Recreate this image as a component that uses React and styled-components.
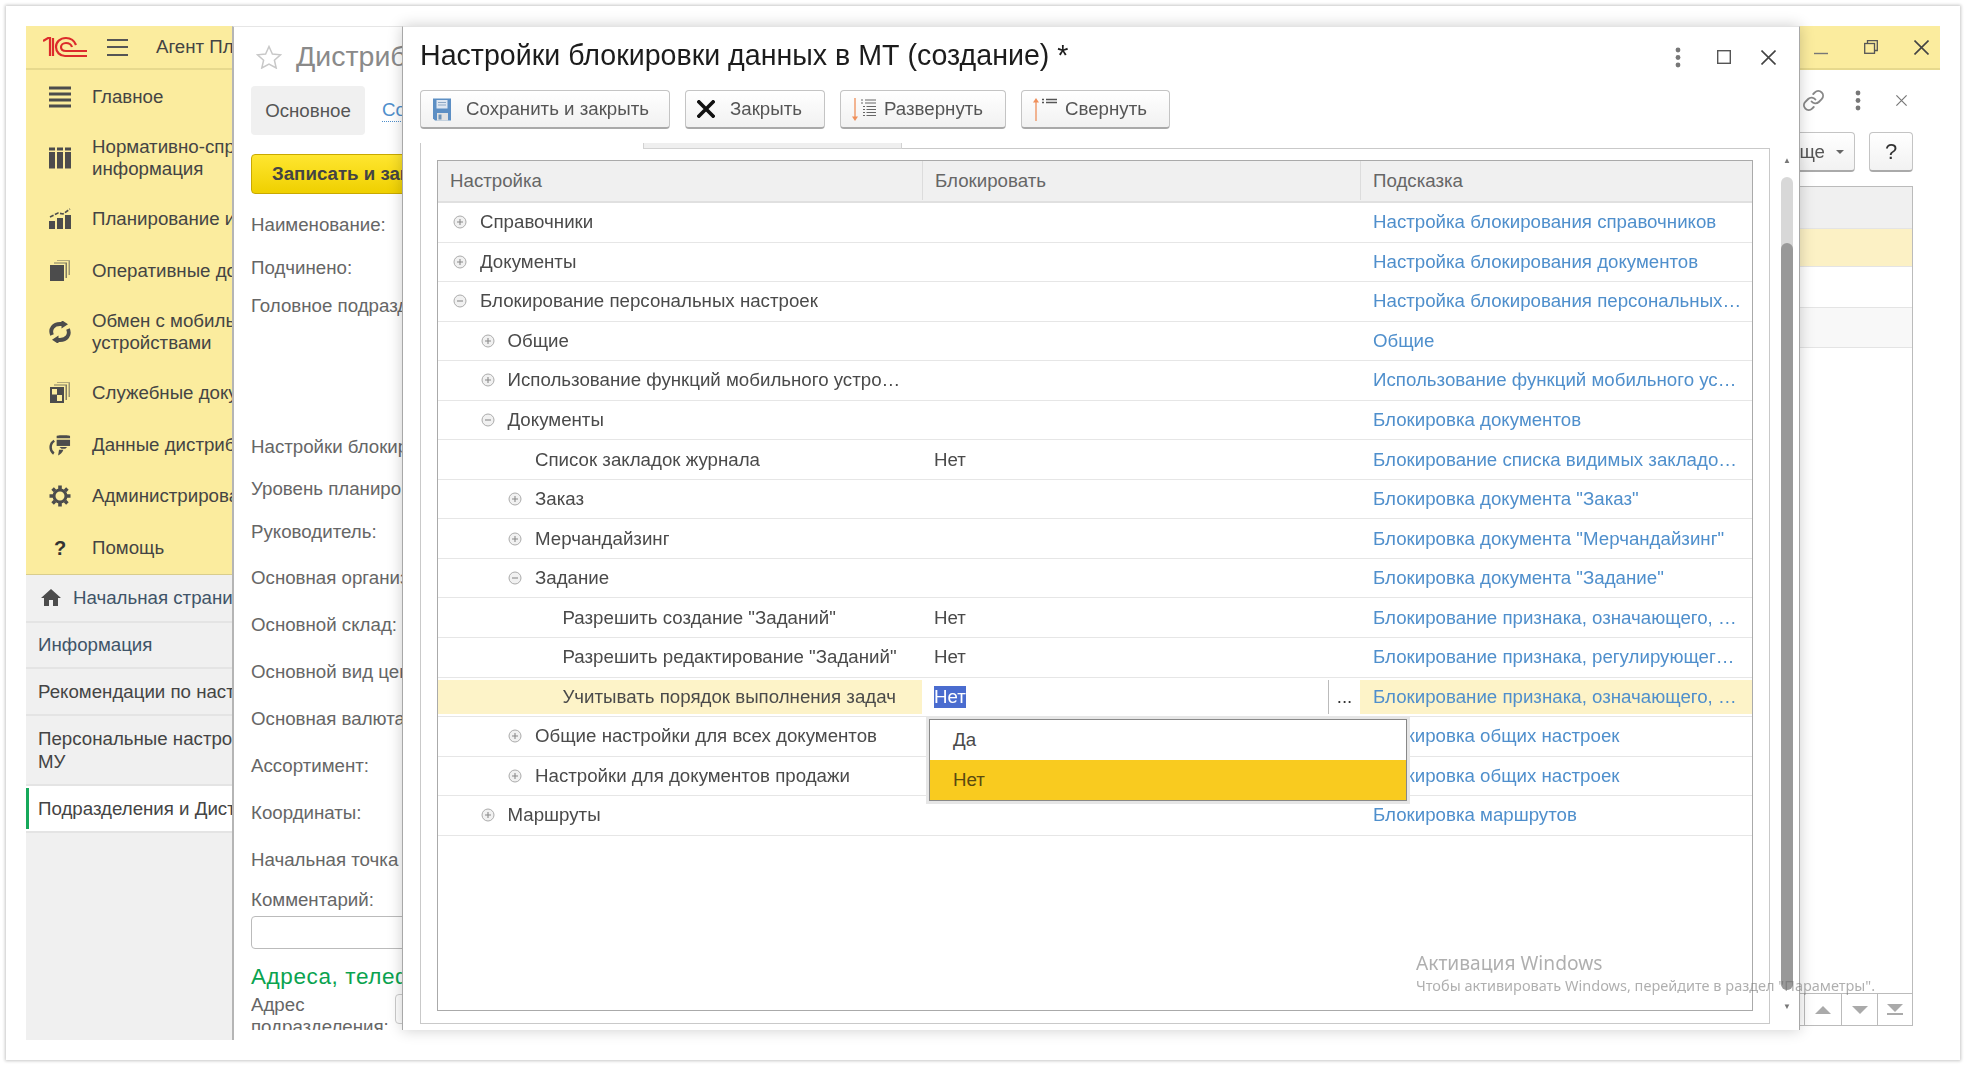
import React from "react";
import styled, { createGlobalStyle } from "styled-components";
import { Link as LinkIcon } from "lucide-react";
import { MdHome } from "react-icons/md";

const GlobalStyle = createGlobalStyle`
  html, body {
    margin: 0;
    background: #fff;
    font-family: "Liberation Sans", Arial, sans-serif;
  }
`;

const Frame = styled.div`
  position: relative;
  box-sizing: border-box;
  width: 1954px;
  height: 1054px;
  margin: 6px;
  padding: 20px;
  background: #fff;
  box-shadow: 0 0 3px 1px rgba(0, 0, 0, 0.22);
  filter: blur(0.45px);
  overflow: hidden;
`;

const Shell = styled.div`
  display: grid;
  grid-template-columns: 206px 170px 1398px 140px;
  grid-template-rows: 44px 970px;
  height: 1014px;
`;

const TopBar = styled.div`
  grid-column: 1 / 5;
  grid-row: 1;
  display: flex;
  align-items: center;
  box-sizing: border-box;
  padding: 0 11px 0 17px;
  background: #fbec9e;
  border-bottom: 2px solid #e7d98d;
  color: #444;
  font-size: 18.7px;
`;

const Hamburger = styled.div`
  width: 21px;
  height: 17px;
  margin-left: 20px;
  margin-right: 28px;
  border-top: 2px solid #555;
  border-bottom: 2px solid #555;
  position: relative;
  box-sizing: border-box;
  &::after {
    content: "";
    position: absolute;
    left: 0;
    right: 0;
    top: 5.5px;
    height: 2px;
    background: #555;
  }
`;

const AppTitle = styled.span`
  white-space: nowrap;
`;

const WindowButtons = styled.div`
  margin-left: auto;
  display: flex;
  align-items: center;
  gap: 36px;
  color: #555;
`;

const Sidebar = styled.aside`
  grid-column: 1;
  grid-row: 2;
  background: #f0f0f0;
  overflow: hidden;
  color: #444;
  font-size: 18.7px;
`;

const SectionList = styled.div`
  padding-top: 1px;
  background: #fbec9e;
  border-bottom: 1px solid #d9cd8c;
`;

const SectionItem = styled.div`
  display: flex;
  align-items: center;
  height: ${(p) => (p.$tall ? "71px" : "51.5px")};
  padding-left: 23px;
  gap: 21px;
  line-height: 22px;
  white-space: nowrap;
`;

const SectionIcon = styled.div`
  width: 22px;
  height: 24px;
  flex: none;
  display: flex;
  align-items: center;
  justify-content: center;
  color: #4c4c4c;
`;

const HelpMark = styled.span`
  font-size: 20px;
  font-weight: 700;
  color: #333;
`;

const OpenItem = styled.div`
  position: relative;
  display: flex;
  align-items: center;
  gap: 10px;
  box-sizing: border-box;
  padding: 0 0 0 12px;
  min-height: ${(p) => p.$height || 46.7}px;
  line-height: 23px;
  white-space: nowrap;
  border-bottom: 2px solid #e4e4e4;
  background: ${(p) => (p.$active ? "#fff" : "transparent")};
  color: ${(p) => (p.$blue ? "#3f5468" : "#444")};
  ${(p) =>
    p.$active &&
    `&::before {
      content: "";
      position: absolute;
      left: 0;
      top: 2px;
      bottom: 2px;
      width: 3px;
      background: #16a85a;
    }`}
`;

const HomeIconBox = styled.span`
  display: flex;
  color: #4c4c4c;
  margin-left: 1px;
`;

const FormColumn = styled.section`
  grid-column: 2;
  grid-row: 1 / 3;
  z-index: 1;
  box-sizing: border-box;
  padding-left: 17px;
  background: #fff;
  border-left: 2px solid #b5b5b5;
  border-top: 1px solid #e6e6e6;
  overflow: hidden;
  color: #666;
  font-size: 18.7px;
  white-space: nowrap;
`;

const FormHead = styled.div`
  display: flex;
  align-items: center;
  gap: 14px;
  height: 59px;
  padding-left: 5px;
  color: #8a8a8a;
  font-size: 28.5px;
`;

const Tabs = styled.div`
  display: flex;
  align-items: center;
  gap: 17px;
`;

const ActiveTab = styled.div`
  flex: none;
  width: 114px;
  height: 49px;
  display: flex;
  align-items: center;
  justify-content: center;
  border-radius: 4px;
  background: #f0f0f0;
  color: #555;
`;

const TabLink = styled.span`
  color: #4f8fcc;
  border-bottom: 1px dotted #4f8fcc;
`;

const PrimaryButton = styled.div`
  box-sizing: border-box;
  height: 40px;
  width: 200px;
  margin-top: 19px;
  padding-left: 20px;
  display: flex;
  align-items: center;
  border: 1px solid #c9a900;
  border-radius: 4px;
  background: linear-gradient(#ffe630, #efd000);
  color: #444;
  font-weight: 700;
`;

const FieldLabel = styled.div`
  height: ${(p) => p.$height}px;
  line-height: 22px;
  display: flex;
  align-items: flex-end;
  color: #666;
`;

const CommentInput = styled.div`
  box-sizing: border-box;
  height: 33px;
  width: 200px;
  margin-top: 5px;
  border: 1px solid #bbb;
  border-radius: 4px;
`;

const GroupTitle = styled.div`
  margin-top: 15px;
  line-height: 26px;
  color: #0aa34f;
  font-size: 22.5px;
  letter-spacing: 0.6px;
`;

const AddressRow = styled.div`
  display: flex;
  margin-top: 4px;
`;

const AddressLabel = styled.div`
  width: 144px;
  line-height: 22px;
  white-space: normal;
`;

const AddressInput = styled.div`
  flex: none;
  box-sizing: border-box;
  width: 60px;
  height: 30px;
  border: 1px solid #ccc;
  border-radius: 4px;
`;

const AddressClip = styled.div`
  flex: none;
  height: 36px;
  overflow: hidden;
`;

const Modal = styled.section`
  grid-column: 3;
  grid-row: 1 / 3;
  z-index: 3;
  display: flex;
  flex-direction: column;
  box-sizing: border-box;
  height: 1004px;
  padding-left: 17px;
  background: #fff;
  border-top: 1px solid #e4e4e4;
  border-left: 1px solid #a8a8a8;
  border-right: 1px solid #a8a8a8;
  box-shadow: 0 0 14px rgba(0, 0, 0, 0.2);
`;

const ModalHead = styled.div`
  display: flex;
  align-items: center;
  flex: none;
  box-sizing: border-box;
  height: 63px;
  padding: 0 23px 6px 0;
  color: #1c1c1c;
  font-size: 28.6px;
`;

const ModalTitle = styled.div`
  flex: 1;
  white-space: nowrap;
`;

const ModalActions = styled.div`
  display: flex;
  align-items: center;
  gap: 30px;
  margin-top: 3px;
  & > svg:first-child {
    margin-right: 6px;
  }
`;

const Toolbar = styled.div`
  flex: none;
  display: flex;
  gap: 15px;
`;

const ToolButton = styled.div`
  box-sizing: border-box;
  height: 39px;
  width: ${(p) => p.$width}px;
  display: flex;
  align-items: center;
  gap: ${(p) => p.$gap || 13}px;
  padding-left: ${(p) => p.$pad || 11}px;
  border: 1px solid #c4c4c4;
  border-bottom: 2px solid #a9a9a9;
  border-radius: 4px;
  background: linear-gradient(#fff, #f1f1f1);
  color: #555;
  font-size: 18.7px;
  white-space: nowrap;
`;

const ModalBody = styled.div`
  flex: 1;
  display: flex;
  margin-top: 14px;
  margin-bottom: 6px;
  min-height: 0;
`;

const TabPanel = styled.div`
  width: 1350px;
  display: flex;
  flex-direction: column;
`;

const TabStrip = styled.div`
  flex: none;
  display: flex;
  height: 6px;
  border-left: 1px solid #c9c9c9;
`;

const StripBlank = styled.div`
  width: 222px;
`;

const StripTail = styled.div`
  box-sizing: border-box;
  width: 259px;
  background: #efefef;
  border: 1px solid #d2d2d2;
  border-top: 0;
`;

const StripRest = styled.div`
  flex: 1;
  border-bottom: 1px solid #c9c9c9;
`;

const PanelBody = styled.div`
  flex: 1;
  min-height: 0;
  display: flex;
  box-sizing: border-box;
  padding: 11px 16px 12px;
  border: 1px solid #c9c9c9;
  border-top: 0;
`;

const Table = styled.div`
  position: relative;
  flex: 1;
  border: 1px solid #aaa;
  color: #4a4a4a;
  font-size: 18.7px;
  white-space: nowrap;
`;

const HeadRow = styled.div`
  display: grid;
  grid-template-columns: 484px 438px 1fr;
  box-sizing: border-box;
  height: 42px;
  padding-bottom: 1px;
  background: #f0f0f0;
  border-bottom: 2px solid #e0e0e0;
  color: #666;
`;

const HeadCell = styled.div`
  display: flex;
  align-items: center;
  padding-left: 12px;
  & + & {
    border-left: 1px solid #dcdcdc;
  }
`;

const Row = styled.div`
  display: grid;
  grid-template-columns: 484px 438px 1fr;
  box-sizing: border-box;
  height: 39.55px;
  border-bottom: 1px solid #e6e6e6;
`;

const NameCell = styled.div`
  display: flex;
  align-items: center;
  gap: 13px;
  margin: ${(p) => (p.$selected ? "2px 0" : "0")};
  padding-left: ${(p) => 15 + p.$level * 27.5}px;
  background: ${(p) => (p.$selected ? "#fdf3c8" : "transparent")};
`;

const ValueCell = styled.div`
  display: flex;
  align-items: center;
  padding-left: 12px;
`;

const EditCell = styled.div`
  display: flex;
  align-items: center;
  padding-left: 12px;
  margin: 2px 0;
`;

const SelectedText = styled.span`
  background: #4a6ccf;
  color: #fff;
`;

const ChoiceButton = styled.div`
  margin-left: auto;
  width: 31px;
  height: 100%;
  display: flex;
  align-items: center;
  justify-content: center;
  border-left: 1px solid #bbb;
  color: #333;
`;

const HintCell = styled.div`
  display: flex;
  align-items: center;
  padding-left: 13px;
  margin: ${(p) => (p.$selected ? "2px 0" : "0")};
  background: ${(p) => (p.$selected ? "#fdf3c8" : "transparent")};
  color: #4f8fcc;
`;

const Toggle = styled.svg`
  flex: none;
  width: 14px;
  height: 14px;
`;

const ToggleGap = styled.span`
  flex: none;
  width: 14px;
`;

const DropList = styled.div`
  position: absolute;
  z-index: 5;
  left: 491px;
  top: 558px;
  width: 478px;
  box-sizing: border-box;
  border: 1px solid #888;
  background: #fff;
  box-shadow: 0 0 0 3px #e6e6e6;
`;

const DropItem = styled.div`
  height: 40px;
  display: flex;
  align-items: center;
  padding-left: 23px;
  background: ${(p) => (p.$current ? "#f9cb1f" : "#fff")};
  color: ${(p) => (p.$current ? "#5a4a10" : "#4a4a4a")};
`;

const ScrollColumn = styled.div`
  position: relative;
  flex: none;
  margin-left: 11px;
  width: 12px;
  display: flex;
  flex-direction: column;
  align-items: center;
`;

const ScrollArrow = styled.div`
  flex: none;
  box-sizing: border-box;
  height: 34px;
  display: flex;
  align-items: ${(p) => (p.$down ? "flex-end" : "flex-start")};
  color: #777;
  font-size: 8px;
  line-height: 12px;
  padding: ${(p) => (p.$down ? "0 0 11px" : "12px 0 0")};
`;

const ScrollTrack = styled.div`
  flex: 1;
  width: 12px;
  padding-top: 66px;
  box-sizing: border-box;
  background: #d8d8d8;
  border-radius: 6px;
`;

const ScrollThumb = styled.div`
  height: 100%;
  border-radius: 6px;
  background: #999;
`;

const RightColumn = styled.section`
  grid-column: 4;
  grid-row: 2;
  z-index: 2;
  display: flex;
  flex-direction: column;
  box-sizing: border-box;
  padding-right: 27px;
  background: #fff;
  overflow: hidden;
  color: #555;
  font-size: 18.7px;
`;

const RightHead = styled.div`
  flex: none;
  display: flex;
  align-items: center;
  height: 60px;
  padding-left: 2px;
  gap: 30px;
  color: #888;
  & > svg:last-child {
    margin-left: 5px;
  }
`;

const RightButtons = styled.div`
  flex: none;
  display: flex;
  justify-content: flex-end;
  gap: 14px;
  height: 40px;
  margin-top: 2px;
`;

const MoreButton = styled.div`
  box-sizing: border-box;
  width: 90px;
  flex: none;
  display: flex;
  align-items: center;
  justify-content: flex-end;
  gap: 11px;
  padding-right: 10px;
  border: 1px solid #c4c4c4;
  border-bottom: 2px solid #aaa;
  border-radius: 4px;
  background: linear-gradient(#fff, #f2f2f2);
`;

const Caret = styled.span`
  width: 0;
  height: 0;
  border-left: 4px solid transparent;
  border-right: 4px solid transparent;
  border-top: 4px solid #666;
`;

const HelpButton = styled(MoreButton)`
  width: 44px;
  justify-content: center;
  padding: 0;
  color: #333;
  font-size: 22px;
`;

const RightTable = styled.div`
  flex: none;
  display: flex;
  flex-direction: column;
  box-sizing: border-box;
  height: 840px;
  margin-top: 14px;
  border: 1px solid #bbb;
  border-width: 1px 1px 1px 0;
`;

const RightRow = styled.div`
  flex: none;
  box-sizing: border-box;
  height: ${(p) => p.$height}px;
  background: ${(p) => p.$color};
  border-bottom: 1px solid #e4e4e4;
`;

const Pager = styled.div`
  margin-top: auto;
  display: grid;
  grid-template-columns: 5px 37px 36px 1fr;
  height: 31px;
  border-top: 1px solid #bbb;
`;

const PagerCell = styled.div`
  display: flex;
  align-items: center;
  justify-content: center;
  border-right: 1px solid #bbb;
  &:last-child {
    border-right: 0;
  }
`;

const Watermark = styled.div`
  position: absolute;
  z-index: 9;
  left: 1410px;
  top: 943px;
  color: rgba(110, 110, 110, 0.55);
  font-family: "Noto Sans", "Liberation Sans", sans-serif;
  white-space: nowrap;
  pointer-events: none;
`;

const WatermarkTitle = styled.div`
  font-size: 19.2px;
  line-height: 27px;
`;

const WatermarkNote = styled.div`
  font-size: 14.5px;
  line-height: 18px;
`;

const StarBox = styled.span`
  flex: none;
  display: flex;
`;

const Logo = () => (
  <svg width="44" height="22" viewBox="0 0 44 22" fill="none" stroke="#dc2b2b" strokeWidth="2.2">
    <path d="M0 5 L5 2 H7 V20 M10 2 V20" />
    <path d="M33 9 C31 4 27 2 23 2 C17 2 13 6 13 11 C13 16 17 20 22 20 H44" />
    <path d="M29 11 C28 8 26 7 23 7 C20 7 18 9 18 11 C18 13.5 20 15 23 15 H44" />
  </svg>
);

const DotsIcon = () => (
  <svg width="6" height="21" viewBox="0 0 6 21" fill="#777">
    <circle cx="3" cy="3" r="2.4" />
    <circle cx="3" cy="10.5" r="2.4" />
    <circle cx="3" cy="18" r="2.4" />
  </svg>
);

const CrossIcon = ({ size = 15, color = "#444", width = 1.6 }) => (
  <svg width={size} height={size} viewBox="0 0 15 15" stroke={color} strokeWidth={width} fill="none">
    <path d="M0.5 0.5 L14.5 14.5 M14.5 0.5 L0.5 14.5" />
  </svg>
);

const MinimizeIcon = () => (
  <svg width="14" height="15" viewBox="0 0 14 15" stroke="#777" strokeWidth="1.4">
    <path d="M0 13.5 H14" />
  </svg>
);

const RestoreIcon = () => (
  <svg width="14" height="14" viewBox="0 0 14 14" stroke="#555" strokeWidth="1.3" fill="none">
    <rect x="0.7" y="3.5" width="9.8" height="9.8" />
    <path d="M3.5 3.5 V0.7 H13.3 V10.5 H10.5" />
  </svg>
);

const SquareIcon = () => (
  <svg width="14" height="14" viewBox="0 0 14 14" stroke="#555" strokeWidth="1.4" fill="none">
    <rect x="0.7" y="0.7" width="12.6" height="12.6" />
  </svg>
);

const StarIcon = () => (
  <svg width="26" height="24" viewBox="0 0 26 24" fill="none" stroke="#c8c8c8" strokeWidth="1.5">
    <path d="M13 1.5 L16.4 9 L24.5 9.8 L18.4 15.2 L20.2 23 L13 19 L5.8 23 L7.6 15.2 L1.5 9.8 L9.6 9 Z" />
  </svg>
);

const FloppyIcon = () => (
  <svg width="20" height="23" viewBox="0 0 20 23">
    <path d="M1 0.5 H19 V22.5 H3 L1 20.5 Z" fill="#5d8fc4" />
    <rect x="4.5" y="2" width="11" height="8.5" fill="#dfe7f1" />
    <rect x="6" y="4" width="8" height="1" fill="#8fa9c6" />
    <rect x="6" y="6.5" width="8" height="1" fill="#8fa9c6" />
    <rect x="5" y="15" width="11" height="7.5" fill="#e2e2e2" />
    <rect x="6.5" y="16.5" width="3" height="5" fill="#6f93b8" />
  </svg>
);

const BoldCross = () => <CrossIcon size={18} color="#111" width={3} />;

const ExpandIcon = () => (
  <svg width="26" height="25" viewBox="0 0 26 25">
    <path d="M3 1 V22" stroke="#ef8f5a" strokeWidth="1.3" />
    <path d="M0 19.5 L3 24 L6 19.5 Z" fill="#ef8f5a" />
    <g stroke="#666" strokeWidth="1.2">
      <path d="M9 3 H11 M13 3 H24 M9 6 H11 M13 6 H24" />
      <path d="M11 9.5 H13 M14.5 9.5 H24 M11 12.5 H13 M14.5 12.5 H24 M11 15.5 H13 M14.5 15.5 H24 M11 18.5 H13 M14.5 18.5 H24" strokeWidth="1" />
    </g>
  </svg>
);

const CollapseIcon = () => (
  <svg width="26" height="25" viewBox="0 0 26 25">
    <path d="M3 3 V24" stroke="#ef8f5a" strokeWidth="1.3" />
    <path d="M0 5.5 L3 1 L6 5.5 Z" fill="#ef8f5a" />
    <g stroke="#555" strokeWidth="1.3">
      <path d="M9 2.5 H11 M13 2.5 H24 M9 5.5 H11 M13 5.5 H24" />
    </g>
  </svg>
);

const iconFill = "currentColor";

const MainIcon = () => (
  <svg width="22" height="22" viewBox="0 0 22 22" fill={iconFill}>
    <rect y="0.5" width="22" height="3" />
    <rect y="6.5" width="22" height="3" />
    <rect y="12.5" width="22" height="3" />
    <rect y="18.5" width="22" height="3" />
  </svg>
);

const CatalogIcon = () => (
  <svg width="22" height="22" viewBox="0 0 22 22" fill={iconFill}>
    <rect y="0.5" width="6" height="3" />
    <rect x="8" y="0.5" width="6" height="3" />
    <rect x="16" y="0.5" width="6" height="3" />
    <rect y="5" width="6" height="16.5" />
    <rect x="8" y="5" width="6" height="16.5" />
    <rect x="16" y="5" width="6" height="16.5" />
  </svg>
);

const ChartIcon = () => (
  <svg width="22" height="22" viewBox="0 0 22 22" fill={iconFill}>
    <rect y="13" width="6" height="8" />
    <rect x="8" y="10" width="6" height="11" />
    <rect x="16" y="7" width="6" height="14" />
    <path d="M1 9 L9 5 L14 6 L21 1" stroke="currentColor" strokeWidth="1.6" fill="none" strokeDasharray="4 1.5" />
  </svg>
);

const DocsIcon = () => (
  <svg width="20" height="22" viewBox="0 0 20 22" fill={iconFill}>
    <rect x="0" y="5" width="14" height="16" />
    <path d="M4 3.5 V2.5 H17 V18 H15.5 V3.5 Z" opacity="0.7" />
    <path d="M7 1 V0.2 H20 V15 H18.5 V1 Z" opacity="0.55" />
  </svg>
);

const ExchangeIcon = () => (
  <svg width="22" height="22" viewBox="0 0 22 22" fill="none" stroke="currentColor" strokeWidth="3.8">
    <path d="M3 14 C0.5 8 4.5 3 11 3 H14" />
    <path d="M19 8 C21.5 14 17.5 19 11 19 H8" />
    <path d="M12.5 -1 L19 3.2 L12.5 7.5 Z M9.5 14.5 L3 18.8 L9.5 23 Z" fill="currentColor" stroke="none" />
  </svg>
);

const ServiceDocsIcon = () => (
  <svg width="20" height="22" viewBox="0 0 20 22" fill={iconFill}>
    <rect x="0" y="5" width="14" height="16" />
    <rect x="2" y="7" width="5" height="5.5" fill="#fbec9e" />
    <rect x="7" y="13" width="5" height="6" fill="#fbec9e" />
    <path d="M4 3.5 V2.5 H17 V18 H15.5 V3.5 Z" opacity="0.7" />
    <path d="M7 1 V0.2 H20 V15 H18.5 V1 Z" opacity="0.55" />
  </svg>
);

const DataIcon = () => (
  <svg width="23" height="22" viewBox="0 0 23 22" fill={iconFill}>
    <path d="M8 1.5 C8 0.5 22 0.5 22 1.5 V4 H8 Z" />
    <rect x="8" y="5.5" width="14" height="6.5" />
    <path d="M11 13 H19 L17 15 H13 Z" />
    <path d="M5.5 6.5 C0.5 9.5 0.5 17 5 20" stroke="currentColor" strokeWidth="2.6" fill="none" />
    <path d="M10.5 16 L15 16 C14 19 12 21 9.5 22 Z" />
  </svg>
);

const GearIcon = () => (
  <svg width="22" height="22" viewBox="0 0 22 22" fill="none" stroke="currentColor">
    <circle cx="11" cy="11" r="6" strokeWidth="3" />
    <path
      d="M11 0.5 V4 M11 18 V21.5 M0.5 11 H4 M18 11 H21.5 M3.6 3.6 L6 6 M16 16 L18.4 18.4 M18.4 3.6 L16 6 M6 16 L3.6 18.4"
      strokeWidth="3.6"
    />
  </svg>
);

const TreeToggle = ({ open }) => (
  <Toggle viewBox="0 0 14 14" fill="#f1f1f1" stroke="#aaa">
    <circle cx="7" cy="7" r="6" />
    <path d={open ? "M4 7 H10" : "M4 7 H10 M7 4 V10"} stroke="#8a8a8a" strokeWidth="1.1" />
  </Toggle>
);

const sections = [
  { label: "Главное", icon: <MainIcon /> },
  { label: ["Нормативно-справочная", "информация"], icon: <CatalogIcon /> },
  { label: "Планирование и анализ", icon: <ChartIcon /> },
  { label: "Оперативные документы", icon: <DocsIcon /> },
  { label: ["Обмен с мобильными", "устройствами"], icon: <ExchangeIcon /> },
  { label: "Служебные документы", icon: <ServiceDocsIcon /> },
  { label: "Данные дистрибьютора", icon: <DataIcon /> },
  { label: "Администрирование", icon: <GearIcon /> },
  { label: "Помощь", icon: <HelpMark>?</HelpMark> },
];

const labels = [
  ["Наименование:", 42],
  ["Подчинено:", 43],
  ["Головное подразделение:", 38],
  ["Настройки блокировки:", 141],
  ["Уровень планирования:", 42],
  ["Руководитель:", 43],
  ["Основная организация:", 46],
  ["Основной склад:", 47],
  ["Основной вид цен:", 47],
  ["Основная валюта:", 47],
  ["Ассортимент:", 47],
  ["Координаты:", 47],
  ["Начальная точка маршрута:", 47],
  ["Комментарий:", 40],
];

const rows = [
  { name: "Справочники", level: 0, toggle: "closed", hint: "Настройка блокирования справочников" },
  { name: "Документы", level: 0, toggle: "closed", hint: "Настройка блокирования документов" },
  { name: "Блокирование персональных настроек", level: 0, toggle: "open", hint: "Настройка блокирования персональных…" },
  { name: "Общие", level: 1, toggle: "closed", hint: "Общие" },
  { name: "Использование функций мобильного устро…", level: 1, toggle: "closed", hint: "Использование функций мобильного ус…" },
  { name: "Документы", level: 1, toggle: "open", hint: "Блокировка документов" },
  { name: "Список закладок журнала", level: 2, value: "Нет", hint: "Блокирование списка видимых закладо…" },
  { name: "Заказ", level: 2, toggle: "closed", hint: 'Блокировка документа "Заказ"' },
  { name: "Мерчандайзинг", level: 2, toggle: "closed", hint: 'Блокировка документа "Мерчандайзинг"' },
  { name: "Задание", level: 2, toggle: "open", hint: 'Блокировка документа "Задание"' },
  { name: 'Разрешить создание "Заданий"', level: 3, value: "Нет", hint: "Блокирование признака, означающего, …" },
  { name: 'Разрешить редактирование "Заданий"', level: 3, value: "Нет", hint: "Блокирование признака, регулирующег…" },
  { name: "Учитывать порядок выполнения задач", level: 3, value: "Нет", selected: true, hint: "Блокирование признака, означающего, …" },
  { name: "Общие настройки для всех документов", level: 2, toggle: "closed", hint: "Блокировка общих настроек" },
  { name: "Настройки для документов продажи", level: 2, toggle: "closed", hint: "Блокировка общих настроек" },
  { name: "Маршруты", level: 1, toggle: "closed", hint: "Блокировка маршрутов" },
];

export default function App() {
  return (
    <>
      <GlobalStyle />
      <Frame>
        <Shell>
          <TopBar>
            <Logo />
            <Hamburger />
            <AppTitle>Агент Плюс</AppTitle>
            <WindowButtons>
              <MinimizeIcon />
              <RestoreIcon />
              <CrossIcon />
            </WindowButtons>
          </TopBar>

          <Sidebar>
            <SectionList>
              {sections.map((item, i) => (
                <SectionItem key={i} $tall={Array.isArray(item.label)}>
                  <SectionIcon>{item.icon}</SectionIcon>
                  <div>
                    {Array.isArray(item.label)
                      ? item.label.map((line) => <div key={line}>{line}</div>)
                      : item.label}
                  </div>
                </SectionItem>
              ))}
            </SectionList>
            <OpenItem $blue $height={48}>
              <HomeIconBox>
                <MdHome size={24} />
              </HomeIconBox>
              Начальная страница
            </OpenItem>
            <OpenItem $blue>Информация</OpenItem>
            <OpenItem>Рекомендации по настройке</OpenItem>
            <OpenItem $height={70}>
              <div>
                <div>Персональные настройки</div>
                <div>МУ</div>
              </div>
            </OpenItem>
            <OpenItem $active>Подразделения и Дистрибьюторы</OpenItem>
          </Sidebar>

          <FormColumn>
            <FormHead>
              <StarBox>
                <StarIcon />
              </StarBox>
              Дистрибьютор
            </FormHead>
            <Tabs>
              <ActiveTab>Основное</ActiveTab>
              <TabLink>Сотрудники</TabLink>
            </Tabs>
            <PrimaryButton>Записать и закрыть</PrimaryButton>
            {labels.map(([text, height]) => (
              <FieldLabel key={text} $height={height}>
                {text}
              </FieldLabel>
            ))}
            <CommentInput />
            <GroupTitle>Адреса, телефоны</GroupTitle>
            <AddressRow>
              <AddressClip>
                <AddressLabel>Адрес подразделения:</AddressLabel>
              </AddressClip>
              <AddressInput />
            </AddressRow>
          </FormColumn>

          <Modal>
            <ModalHead>
              <ModalTitle>Настройки блокировки данных в МТ (создание) *</ModalTitle>
              <ModalActions>
                <DotsIcon />
                <SquareIcon />
                <CrossIcon />
              </ModalActions>
            </ModalHead>
            <Toolbar>
              <ToolButton $width={250} $gap={14}>
                <FloppyIcon />
                Сохранить и закрыть
              </ToolButton>
              <ToolButton $width={140} $gap={15}>
                <BoldCross />
                Закрыть
              </ToolButton>
              <ToolButton $width={166} $gap={6}>
                <ExpandIcon />
                Развернуть
              </ToolButton>
              <ToolButton $width={149} $gap={6}>
                <CollapseIcon />
                Свернуть
              </ToolButton>
            </Toolbar>
            <ModalBody>
              <TabPanel>
                <TabStrip>
                  <StripBlank />
                  <StripTail />
                  <StripRest />
                </TabStrip>
                <PanelBody>
                  <Table>
                    <HeadRow>
                      <HeadCell>Настройка</HeadCell>
                      <HeadCell>Блокировать</HeadCell>
                      <HeadCell>Подсказка</HeadCell>
                    </HeadRow>
                    {rows.map((row, i) => (
                      <Row key={i}>
                        <NameCell $level={row.level} $selected={row.selected}>
                          {row.toggle ? <TreeToggle open={row.toggle === "open"} /> : <ToggleGap />}
                          {row.name}
                        </NameCell>
                        {row.selected ? (
                          <EditCell>
                            <SelectedText>{row.value}</SelectedText>
                            <ChoiceButton>...</ChoiceButton>
                          </EditCell>
                        ) : (
                          <ValueCell>{row.value}</ValueCell>
                        )}
                        <HintCell $selected={row.selected}>{row.hint}</HintCell>
                      </Row>
                    ))}
                    <DropList>
                      <DropItem>Да</DropItem>
                      <DropItem $current>Нет</DropItem>
                    </DropList>
                  </Table>
                </PanelBody>
              </TabPanel>
              <ScrollColumn>
                <ScrollArrow>▲</ScrollArrow>
                <ScrollTrack>
                  <ScrollThumb />
                </ScrollTrack>
                <ScrollArrow $down>▼</ScrollArrow>
              </ScrollColumn>
            </ModalBody>
          </Modal>

          <RightColumn>
            <RightHead>
              <LinkIcon size={23} />
              <DotsIcon />
              <CrossIcon size={11} color="#777" />
            </RightHead>
            <RightButtons>
              <MoreButton>
                Еще
                <Caret />
              </MoreButton>
              <HelpButton>?</HelpButton>
            </RightButtons>
            <RightTable>
              <RightRow $height={42} $color="#f0f0f0" />
              <RightRow $height={38} $color="#fcf1c5" />
              <RightRow $height={41} $color="#fff" />
              <RightRow $height={40} $color="#f8f8f8" />
              <Pager>
                <PagerCell />
                <PagerCell>
                  <svg width="16" height="8" viewBox="0 0 16 8" fill="#aaa">
                    <path d="M8 0 L16 8 H0 Z" />
                  </svg>
                </PagerCell>
                <PagerCell>
                  <svg width="16" height="8" viewBox="0 0 16 8" fill="#aaa">
                    <path d="M0 0 H16 L8 8 Z" />
                  </svg>
                </PagerCell>
                <PagerCell>
                  <svg width="16" height="11" viewBox="0 0 16 11" fill="#aaa">
                    <path d="M0 0 H16 L8 8 Z" />
                    <rect y="9" width="16" height="2" />
                  </svg>
                </PagerCell>
              </Pager>
            </RightTable>
          </RightColumn>
        </Shell>
        <Watermark>
          <WatermarkTitle>Активация Windows</WatermarkTitle>
          <WatermarkNote>Чтобы активировать Windows, перейдите в раздел "Параметры".</WatermarkNote>
        </Watermark>
      </Frame>
    </>
  );
}
